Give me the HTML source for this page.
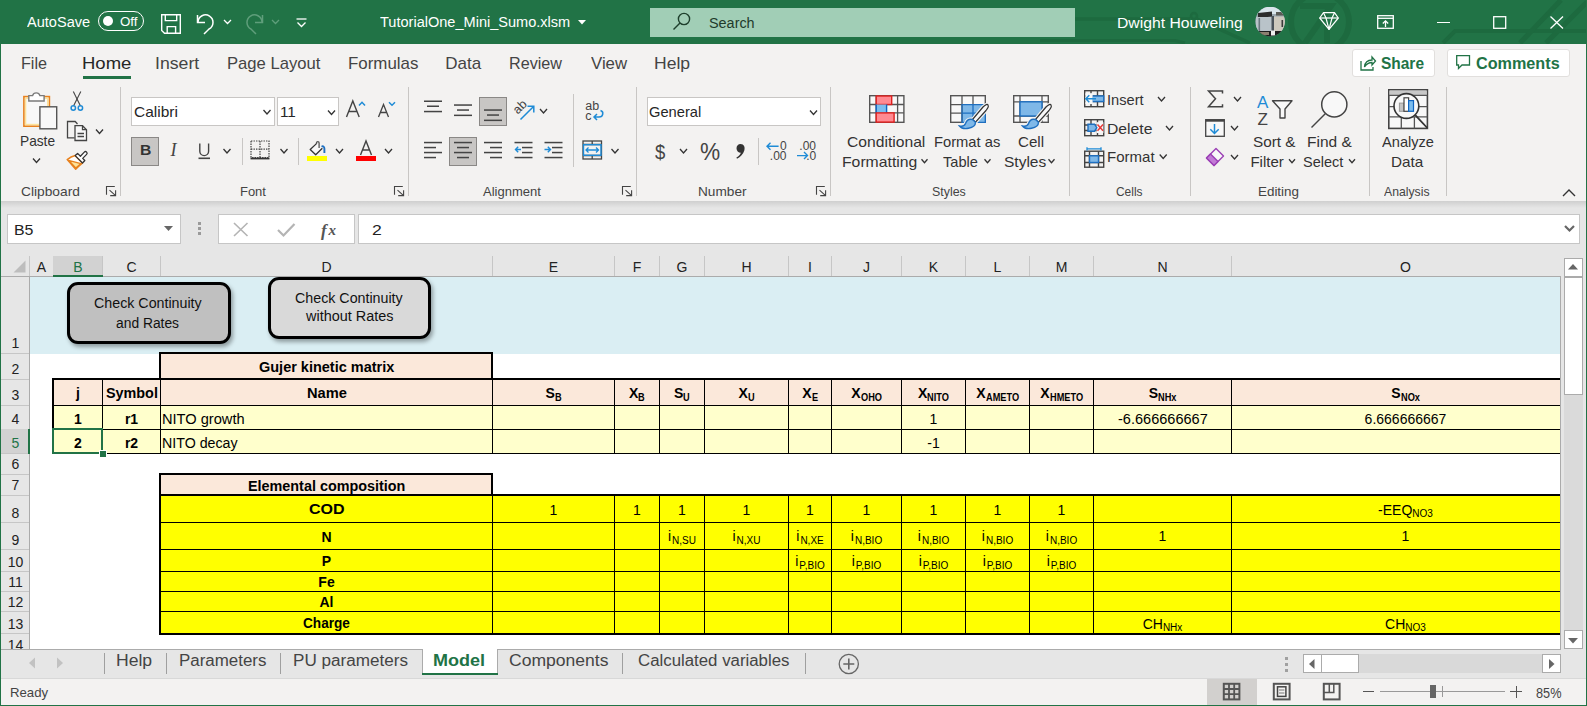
<!DOCTYPE html><html><head><meta charset="utf-8"><style>
html,body{margin:0;padding:0}body{width:1587px;height:706px;overflow:hidden;position:relative;background:#f3f2f1;font-family:"Liberation Sans",sans-serif}
.t{position:absolute;white-space:nowrap;line-height:normal;font-family:"Liberation Sans",sans-serif}
svg{overflow:visible}
</style></head><body>
<div style="position:absolute;left:0px;top:0px;width:1587px;height:44px;background:#217346;"></div>
<svg style="position:absolute;left:0px;top:0px;overflow:hidden;" width="1587" height="44" viewBox="0 0 1587 44"><g stroke="#1d6a3f" fill="none"><path d="M1040 19 H1190" stroke-width="3.5"/><circle cx="1194" cy="16" r="3" stroke-width="2.5"/><path d="M1197 19 L1250 43" stroke-width="3.5"/><path d="M1040 40.5 H1175 L1185 43" stroke-width="3"/><circle cx="1320" cy="22" r="29" stroke-width="6"/><path d="M1300 6 H1331 L1305 43 M1327 24 V43" stroke-width="6"/><path d="M1443 43 L1455 31 H1587" stroke-width="4"/><path d="M1520 43 L1561 0 M1546 43 L1587 2" stroke-width="5"/></g></svg>
<div class="t" style="left:27.00px;top:13.00px;font-size:15.5px;color:#fff;transform:scaleX(0.9399);transform-origin:0 0;">AutoSave</div>
<div style="position:absolute;left:98px;top:11px;width:46px;height:20px;background:transparent;box-sizing:border-box;border:1.5px solid #fff;border-radius:10px;"></div>
<div style="position:absolute;left:103px;top:16px;width:10px;height:10px;border-radius:50%;background:#fff"></div>
<div class="t" style="left:120.40px;top:14.00px;font-size:13.5px;color:#fff;transform:scaleX(0.9877);transform-origin:0 0;">Off</div>
<svg style="position:absolute;left:161px;top:14px;" width="21" height="21" viewBox="0 0 21 21"><g fill="none" stroke="#fff" stroke-width="1.4"><path d="M0.7 0.7 H19.3 V19.3 H3.5 L0.7 16.5 Z"/><path d="M4.3 0.7 V6.6 H15.7 V0.7"/><path d="M6.2 19.3 V12.6 H14.6 V19.3"/></g></svg>
<svg style="position:absolute;left:196px;top:13px;" width="20" height="22" viewBox="0 0 20 22"><g fill="none" stroke="#fff" stroke-width="1.5"><path d="M2 9 A7.5 7.5 0 1 1 13 16 L8 21"/><path d="M1.5 2 V9.5 H9"/></g></svg>
<svg style="position:absolute;left:223px;top:19px;" width="9" height="6" viewBox="0 0 9 6"><path d="M1 1 L4.5 4.5 L8 1" fill="none" stroke="#fff" stroke-width="1.3"/></svg>
<svg style="position:absolute;left:244px;top:13px;" width="20" height="22" viewBox="0 0 20 22"><g fill="none" stroke="#5f9e7b" stroke-width="1.5"><path d="M18 9 A7.5 7.5 0 1 0 7 16 L12 21"/><path d="M18.5 2 V9.5 H11"/></g></svg>
<svg style="position:absolute;left:271px;top:19px;" width="9" height="6" viewBox="0 0 9 6"><path d="M1 1 L4.5 4.5 L8 1" fill="none" stroke="#5f9e7b" stroke-width="1.3"/></svg>
<svg style="position:absolute;left:296px;top:18px;" width="11" height="10" viewBox="0 0 11 10"><g fill="none" stroke="#fff" stroke-width="1.3"><path d="M0.5 1 H10.5"/><path d="M1.5 4.5 L5.5 8.5 L9.5 4.5"/></g></svg>
<div class="t" style="left:379.71px;top:13.00px;font-size:15.5px;color:#fff;transform:scaleX(0.9383);transform-origin:0 0;">TutorialOne_Mini_Sumo.xlsm</div>
<svg style="position:absolute;left:578px;top:20px;" width="8" height="5" viewBox="0 0 8 5"><path d="M0 0 H8 L4 4.5 Z" fill="#fff"/></svg>
<div style="position:absolute;left:650px;top:8px;width:425px;height:29px;background:#a1ceb6;"></div>
<svg style="position:absolute;left:672px;top:12px;" width="19" height="19" viewBox="0 0 19 19"><g fill="none" stroke="#1e3f2c" stroke-width="1.4"><circle cx="12" cy="7" r="5.6"/><path d="M8 11 L1.5 17.5"/></g></svg>
<div class="t" style="left:709.35px;top:14.00px;font-size:15.5px;color:#1f3b2b;transform:scaleX(0.9292);transform-origin:0 0;">Search</div>
<div class="t" style="left:1116.74px;top:14.00px;font-size:15.5px;color:#fff;transform:scaleX(1.0137);transform-origin:0 0;">Dwight Houweling</div>
<svg style="position:absolute;left:1255px;top:7px;" width="31" height="30" viewBox="0 0 31 30"><defs><clipPath id="av"><circle cx="15.1" cy="14.6" r="14.8"/></clipPath></defs><g clip-path="url(#av)"><rect width="31" height="30" fill="#9aa6ae"/><rect x="0" y="0" width="31" height="7" fill="#d8e4ea"/><path d="M3 6 L17 4.5 L17 9.5 L3 11 Z" fill="#2c2c2c"/><rect x="1" y="10" width="16" height="16" fill="#b9c3c9"/><rect x="3.5" y="11" width="1.6" height="14" fill="#6b7880"/><rect x="16.5" y="9" width="2.5" height="17" fill="#4a525a"/><rect x="19" y="9.5" width="12" height="14.5" fill="#cdc8bd"/><rect x="21" y="5" width="9" height="3.5" fill="#5a5a55"/><rect x="26.5" y="13" width="1.6" height="7" fill="#3a3a3a"/><rect x="0" y="24" width="31" height="6" fill="#1f1f1f"/><rect x="0" y="25" width="14" height="3" fill="#8d8070"/><rect x="16" y="23.5" width="4" height="5" fill="#eeeeee"/></g></svg>
<svg style="position:absolute;left:1319px;top:12px;" width="20" height="18" viewBox="0 0 20 18"><g fill="none" stroke="#fff" stroke-width="1.2" stroke-linejoin="round"><path d="M4.5 0.7 H15.5 L19.3 6 L10 17.3 L0.7 6 Z"/><path d="M0.7 6 H19.3"/><path d="M4.5 0.7 L7 6 L10 17.3 L13 6 L15.5 0.7"/></g></svg>
<svg style="position:absolute;left:1377px;top:15px;" width="17" height="14" viewBox="0 0 17 14"><g fill="none" stroke="#fff" stroke-width="1.3"><rect x="0.7" y="0.7" width="15.6" height="12.6"/><path d="M0.7 3.3 H16.3"/><path d="M8.5 12 V6"/><path d="M5.8 8.5 L8.5 5.8 L11.2 8.5"/></g></svg>
<div style="position:absolute;left:1437px;top:22px;width:13px;height:1.3px;background:#fff;"></div>
<svg style="position:absolute;left:1493px;top:16px;" width="14" height="13" viewBox="0 0 14 13"><rect x="0.7" y="0.7" width="12" height="11.6" fill="none" stroke="#fff" stroke-width="1.3"/></svg>
<svg style="position:absolute;left:1550px;top:16px;" width="14" height="13" viewBox="0 0 14 13"><path d="M0.5 0.5 L13 12.5 M13 0.5 L0.5 12.5" fill="none" stroke="#fff" stroke-width="1.3"/></svg>
<div class="t" style="left:21.31px;top:54.00px;font-size:17px;color:#444;transform:scaleX(0.9507);transform-origin:0 0;">File</div>
<div class="t" style="left:81.52px;top:54.00px;font-size:17px;color:#262626;transform:scaleX(1.0885);transform-origin:0 0;">Home</div>
<div style="position:absolute;left:83px;top:76px;width:48px;height:3px;background:#217346;"></div>
<div class="t" style="left:155.41px;top:54.00px;font-size:17px;color:#444;transform:scaleX(1.0395);transform-origin:0 0;">Insert</div>
<div class="t" style="left:227.17px;top:54.00px;font-size:17px;color:#444;transform:scaleX(0.9786);transform-origin:0 0;">Page Layout</div>
<div class="t" style="left:348.05px;top:54.00px;font-size:17px;color:#444;transform:scaleX(0.9937);transform-origin:0 0;">Formulas</div>
<div class="t" style="left:445.24px;top:54.00px;font-size:17px;color:#444;">Data</div>
<div class="t" style="left:509.01px;top:54.00px;font-size:17px;color:#444;transform:scaleX(0.9504);transform-origin:0 0;">Review</div>
<div class="t" style="left:590.92px;top:54.00px;font-size:17px;color:#444;transform:scaleX(0.9872);transform-origin:0 0;">View</div>
<div class="t" style="left:653.89px;top:54.00px;font-size:17px;color:#444;transform:scaleX(1.0336);transform-origin:0 0;">Help</div>
<div style="position:absolute;left:1352px;top:49px;width:83px;height:28px;background:#fff;box-sizing:border-box;border:1px solid #e1dfdd;border-radius:3px;"></div>
<svg style="position:absolute;left:1360px;top:55px;" width="16" height="16" viewBox="0 0 16 16"><g fill="none" stroke="#217346" stroke-width="1.3"><path d="M1 6 V15 H13 V12"/><path d="M4.5 12 C5 7 8 5 12 5 V2 L15.5 6 L12 10 V7.5 C9 7.5 6.5 9 4.5 12 Z"/></g></svg>
<div class="t" style="left:1381.24px;top:54.00px;font-size:17px;color:#217346;font-weight:bold;transform:scaleX(0.9100);transform-origin:0 0;">Share</div>
<div style="position:absolute;left:1447px;top:49px;width:123px;height:28px;background:#fff;box-sizing:border-box;border:1px solid #e1dfdd;border-radius:3px;"></div>
<svg style="position:absolute;left:1456px;top:55px;" width="15" height="15" viewBox="0 0 15 15"><path d="M0.7 0.7 H13.5 V10 H6 L2.5 13.5 V10 H0.7 Z" fill="none" stroke="#217346" stroke-width="1.3"/></svg>
<div class="t" style="left:1476.05px;top:54.00px;font-size:17px;color:#217346;font-weight:bold;transform:scaleX(0.9521);transform-origin:0 0;">Comments</div>
<div style="position:absolute;left:120px;top:87px;width:1px;height:109px;background:#c8c6c4;"></div>
<div style="position:absolute;left:408px;top:87px;width:1px;height:109px;background:#c8c6c4;"></div>
<div style="position:absolute;left:636px;top:87px;width:1px;height:109px;background:#c8c6c4;"></div>
<div style="position:absolute;left:830px;top:87px;width:1px;height:109px;background:#c8c6c4;"></div>
<div style="position:absolute;left:1069px;top:87px;width:1px;height:109px;background:#c8c6c4;"></div>
<div style="position:absolute;left:1190px;top:87px;width:1px;height:109px;background:#c8c6c4;"></div>
<div style="position:absolute;left:1369px;top:87px;width:1px;height:109px;background:#c8c6c4;"></div>
<div style="position:absolute;left:1446px;top:87px;width:1px;height:109px;background:#c8c6c4;"></div>
<svg style="position:absolute;left:22px;top:90px;" width="37" height="40" viewBox="0 0 37 40"><rect x="1.9" y="6.6" width="25.5" height="29.6" fill="#f8f8f8" stroke="#e8821e" stroke-width="1.6"/><rect x="3.6" y="8.3" width="22.1" height="26.2" fill="none" stroke="#fde39a" stroke-width="1.4"/><path d="M6.8 11 V5.6 H10.6 A3.8 3.8 0 0 1 17.9 5.6 H22.1 V11 Z" fill="#fff" stroke="#7a7a7a" stroke-width="1.4"/><rect x="17.9" y="16.8" width="16.8" height="22" fill="#f8f8f8" stroke="#555" stroke-width="1.4"/></svg>
<div class="t" style="left:19.60px;top:132.00px;font-size:15px;color:#333;transform:scaleX(0.9136);transform-origin:0 0;">Paste</div>
<svg style="position:absolute;left:32px;top:157px;" width="9" height="6" viewBox="0 0 9 6"><path d="M1.00 1.50 L4.50 5.50 L8.00 1.50" fill="none" stroke="#333" stroke-width="1.3"/></svg>
<svg style="position:absolute;left:70px;top:90px;" width="14" height="21" viewBox="0 0 14 21"><g fill="none" stroke="#444" stroke-width="1.1"><path d="M3.3 1.5 L10.5 16"/><path d="M10.8 1.5 L3.5 16"/></g><g fill="none" stroke="#1e8bd6" stroke-width="1.5"><circle cx="3.3" cy="18" r="2.2"/><circle cx="10.4" cy="18" r="2.2"/></g></svg>
<svg style="position:absolute;left:66px;top:120px;" width="22" height="22" viewBox="0 0 22 22"><g fill="none" stroke="#444" stroke-width="1.3"><path d="M8.5 17.8 H1.5 V1.5 H9.2 L11.5 4"/><path d="M9 5.7 H16.5 L20.5 9.7 V20.5 H9 Z" fill="#f8f8f8"/><path d="M16.5 5.7 V9.7 H20.5"/><path d="M11.5 13.5 H18 M11.5 16.5 H18"/></g></svg>
<svg style="position:absolute;left:95px;top:128px;" width="9" height="6" viewBox="0 0 9 6"><path d="M1.00 1.50 L4.50 5.50 L8.00 1.50" fill="none" stroke="#333" stroke-width="1.3"/></svg>
<svg style="position:absolute;left:64px;top:148px;" width="26" height="24" viewBox="0 0 26 24"><path d="M3.2 11.6 Q7 8.5 11.2 7.6 L18.5 15 Q15 18 11.7 21.2 Z" fill="#fff" stroke="#e8821e" stroke-width="1.5" stroke-linejoin="round"/><path d="M4.5 12.3 L17 15.6 L11.8 20 Z" fill="#fde39a" stroke="#e8821e" stroke-width="1.3" stroke-linejoin="round"/><path d="M11.2 7.6 L13.6 5.4 L16.4 8.2 L20.3 4.1 A1.6 1.6 0 0 1 22.6 6.4 L18.7 10.4 L20.8 12.5 L18.5 15 Z" fill="#fff" stroke="#333" stroke-width="1.3" stroke-linejoin="round"/></svg>
<div class="t" style="left:20.51px;top:184.00px;font-size:13px;color:#444;transform:scaleX(1.0583);transform-origin:0 0;">Clipboard</div>
<svg style="position:absolute;left:106px;top:186px;" width="11" height="11" viewBox="0 0 11 11"><g fill="none" stroke="#444" stroke-width="1.1"><path d="M0.5 8.8 V0.5 H8.8"/><path d="M3.5 4.2 L9.6 9.6 M9.6 4.2 V9.6 H4.2"/></g></svg>
<div style="position:absolute;left:131px;top:97px;width:144px;height:29px;background:#fff;box-sizing:border-box;border:1px solid #c8c6c4;"></div>
<div class="t" style="left:133.73px;top:103.00px;font-size:15px;color:#262626;transform:scaleX(1.0313);transform-origin:0 0;">Calibri</div>
<svg style="position:absolute;left:262px;top:109px;" width="9" height="6" viewBox="0 0 9 6"><path d="M1.50 1.00 L5.00 5.00 L8.50 1.00" fill="none" stroke="#333" stroke-width="1.3"/></svg>
<div style="position:absolute;left:277px;top:97px;width:62px;height:29px;background:#fff;box-sizing:border-box;border:1px solid #c8c6c4;"></div>
<div class="t" style="left:279.85px;top:103.00px;font-size:15px;color:#262626;transform:scaleX(1.0200);transform-origin:0 0;">11</div>
<svg style="position:absolute;left:327px;top:109px;" width="9" height="6" viewBox="0 0 9 6"><path d="M1.00 1.50 L4.50 5.50 L8.00 1.50" fill="none" stroke="#333" stroke-width="1.3"/></svg>
<svg style="position:absolute;left:345px;top:100px;" width="22" height="18" viewBox="0 0 22 18"><g fill="none" stroke="#444" stroke-width="1.4"><path d="M1.5 17 L7.8 1 L14.2 17 M4 11.5 H11.6"/></g><path d="M14 5.5 L17 2.3 L20 5.5" fill="none" stroke="#1e8bd6" stroke-width="1.5"/></svg>
<svg style="position:absolute;left:377px;top:101px;" width="20" height="17" viewBox="0 0 20 17"><g fill="none" stroke="#444" stroke-width="1.3"><path d="M1.5 16 L6.5 3.6 L11.5 16 M3.5 11.5 H9.5"/></g><path d="M12 1.3 L15 4.3 L18 1.3" fill="none" stroke="#1e8bd6" stroke-width="1.5"/></svg>
<div style="position:absolute;left:131px;top:137px;width:28px;height:29px;background:#c8c6c4;box-sizing:border-box;border:1px solid #8a8886;"></div>
<div class="t" style="left:139.68px;top:141.00px;font-size:15px;color:#333;font-weight:bold;transform:scaleX(1.0492);transform-origin:0 0;">B</div>
<div class="t" style="left:170.50px;top:140.00px;font-size:18px;color:#444;font-family:'Liberation Serif';font-style:italic;">I</div>
<svg style="position:absolute;left:197px;top:143px;" width="15" height="18" viewBox="0 0 15 18"><g fill="none" stroke="#444" stroke-width="1.4"><path d="M2.8 0.5 V8.2 A4.4 4.4 0 0 0 11.6 8.2 V0.5"/></g><rect x="1.5" y="14.5" width="11.5" height="1.6" fill="#444"/></svg>
<svg style="position:absolute;left:222px;top:148px;" width="9" height="6" viewBox="0 0 9 6"><path d="M1.50 1.00 L5.00 5.00 L8.50 1.00" fill="none" stroke="#333" stroke-width="1.3"/></svg>
<div style="position:absolute;left:242px;top:138px;width:1px;height:27px;background:#c8c6c4;"></div>
<svg style="position:absolute;left:250px;top:140px;" width="21" height="21" viewBox="0 0 21 21"><g fill="none" stroke="#444" stroke-width="1.2" stroke-dasharray="1.4 1.1"><rect x="1" y="1" width="18" height="16.5"/><path d="M10 1 V17.5 M1 9.2 H19"/></g><rect x="0.5" y="17.6" width="19" height="1.8" fill="#333"/></svg>
<svg style="position:absolute;left:279px;top:148px;" width="9" height="6" viewBox="0 0 9 6"><path d="M1.50 1.00 L5.00 5.00 L8.50 1.00" fill="none" stroke="#333" stroke-width="1.3"/></svg>
<div style="position:absolute;left:298px;top:138px;width:1px;height:27px;background:#c8c6c4;"></div>
<svg style="position:absolute;left:309px;top:140px;" width="18" height="16" viewBox="0 0 18 16"><path d="M7.5 3.6 L1.2 9.5 L6.7 14.7 L13.3 8.2 Z" fill="#f8f8f8"/><path d="M7.5 3.6 L1.2 9.5 L6.7 14.7 L13.3 8.2" fill="none" stroke="#333" stroke-width="1.3" stroke-linejoin="round"/><path d="M7.5 4 V2.9 A1.3 1.3 0 0 1 10.1 2.9 V8" fill="none" stroke="#555" stroke-width="1.3"/><path d="M12.6 6.7 C14.2 5.6 15.4 7 15.4 8.7 V13" fill="none" stroke="#1e6fc0" stroke-width="1.9"/></svg>
<div style="position:absolute;left:307px;top:156px;width:20px;height:5px;background:#ffff00;"></div>
<svg style="position:absolute;left:335px;top:148px;" width="9" height="6" viewBox="0 0 9 6"><path d="M1.00 1.00 L4.50 5.00 L8.00 1.00" fill="none" stroke="#333" stroke-width="1.3"/></svg>
<svg style="position:absolute;left:359px;top:140px;" width="15" height="16" viewBox="0 0 15 16"><g fill="none" stroke="#444" stroke-width="1.4"><path d="M1.5 15 L7 1 L12.5 15 M3.5 10 H10.5"/></g></svg>
<div style="position:absolute;left:356px;top:156px;width:20px;height:5px;background:#ff0000;"></div>
<svg style="position:absolute;left:384px;top:148px;" width="9" height="6" viewBox="0 0 9 6"><path d="M1.00 1.00 L4.50 5.00 L8.00 1.00" fill="none" stroke="#333" stroke-width="1.3"/></svg>
<div class="t" style="left:239.96px;top:184.00px;font-size:13px;color:#444;">Font</div>
<svg style="position:absolute;left:394px;top:186px;" width="11" height="11" viewBox="0 0 11 11"><g fill="none" stroke="#444" stroke-width="1.1"><path d="M0.5 8.8 V0.5 H8.8"/><path d="M3.5 4.2 L9.6 9.6 M9.6 4.2 V9.6 H4.2"/></g></svg>
<svg style="position:absolute;left:424px;top:0px;" width="20" height="200" viewBox="0 0 20 200"><rect x="0" y="100.5" width="18" height="1.5" fill="#444"/><rect x="3" y="105.5" width="12" height="1.5" fill="#444"/><rect x="0" y="110.8" width="18" height="1.5" fill="#444"/></svg>
<svg style="position:absolute;left:454px;top:0px;" width="20" height="200" viewBox="0 0 20 200"><rect x="0" y="104.3" width="18" height="1.5" fill="#444"/><rect x="3" y="109.3" width="12" height="1.5" fill="#444"/><rect x="0" y="114.6" width="18" height="1.5" fill="#444"/></svg>
<div style="position:absolute;left:479px;top:97px;width:28px;height:29px;background:#c8c6c4;box-sizing:border-box;border:1px solid #8a8886;"></div>
<svg style="position:absolute;left:484px;top:0px;" width="20" height="200" viewBox="0 0 20 200"><rect x="0" y="109.3" width="18" height="1.5" fill="#444"/><rect x="3" y="114.3" width="12" height="1.5" fill="#444"/><rect x="0" y="119.6" width="18" height="1.5" fill="#444"/></svg>
<svg style="position:absolute;left:512px;top:99px;" width="24" height="22" viewBox="0 0 24 22"><g transform="translate(7.6 7.8) rotate(-45)"><text x="0" y="4.3" text-anchor="middle" font-family="Liberation Sans" font-size="12.5" fill="#444">ab</text></g><path d="M8.5 20.5 L21.8 7.2 M15.5 7.2 H21.8 V13.5" fill="none" stroke="#1e8bd6" stroke-width="1.5"/></svg>
<svg style="position:absolute;left:539px;top:108px;" width="9" height="6" viewBox="0 0 9 6"><path d="M1.00 1.00 L4.50 5.00 L8.00 1.00" fill="none" stroke="#333" stroke-width="1.3"/></svg>
<svg style="position:absolute;left:424px;top:0px;" width="20" height="200" viewBox="0 0 20 200"><rect x="0" y="141.8" width="18" height="1.5" fill="#444"/><rect x="0" y="146.8" width="12" height="1.5" fill="#444"/><rect x="0" y="151.8" width="18" height="1.5" fill="#444"/><rect x="0" y="156.8" width="12" height="1.5" fill="#444"/></svg>
<div style="position:absolute;left:449px;top:137px;width:28px;height:29px;background:#c8c6c4;box-sizing:border-box;border:1px solid #8a8886;"></div>
<svg style="position:absolute;left:454px;top:0px;" width="20" height="200" viewBox="0 0 20 200"><rect x="0" y="141.8" width="18" height="1.5" fill="#444"/><rect x="3" y="146.8" width="12" height="1.5" fill="#444"/><rect x="0" y="151.8" width="18" height="1.5" fill="#444"/><rect x="3" y="156.8" width="12" height="1.5" fill="#444"/></svg>
<svg style="position:absolute;left:484px;top:0px;" width="20" height="200" viewBox="0 0 20 200"><rect x="0" y="141.8" width="18" height="1.5" fill="#444"/><rect x="6" y="146.8" width="12" height="1.5" fill="#444"/><rect x="0" y="151.8" width="18" height="1.5" fill="#444"/><rect x="6" y="156.8" width="12" height="1.5" fill="#444"/></svg>
<svg style="position:absolute;left:514px;top:140px;" width="20" height="20" viewBox="0 0 20 20"><g fill="#444"><rect x="0.5" y="1.8" width="18" height="1.5"/><rect x="8" y="6.8" width="10.5" height="1.5"/><rect x="8" y="11.8" width="10.5" height="1.5"/><rect x="0.5" y="16.8" width="18" height="1.5"/></g><path d="M7 9.5 H1.5 M4.2 6.8 L1.5 9.5 L4.2 12.2" fill="none" stroke="#1e8bd6" stroke-width="1.4"/></svg>
<svg style="position:absolute;left:544px;top:140px;" width="20" height="20" viewBox="0 0 20 20"><g fill="#444"><rect x="0.5" y="1.8" width="18" height="1.5"/><rect x="8" y="6.8" width="10.5" height="1.5"/><rect x="8" y="11.8" width="10.5" height="1.5"/><rect x="0.5" y="16.8" width="18" height="1.5"/></g><path d="M0.5 9.5 H6.5 M3.8 6.8 L6.5 9.5 L3.8 12.2" fill="none" stroke="#1e8bd6" stroke-width="1.4"/></svg>
<div style="position:absolute;left:573px;top:94px;width:1px;height:73px;background:#c8c6c4;"></div>
<svg style="position:absolute;left:584px;top:101px;" width="22" height="21" viewBox="0 0 22 21"><text x="1.3" y="9.3" font-family="Liberation Sans" font-size="12.5" fill="#444">ab</text><text x="1.3" y="18.8" font-family="Liberation Sans" font-size="12.5" fill="#444">c</text><path d="M16.5 9.5 C20 10.5 19.5 16 15 16 H10 M13 13 L10 16 L13 19" fill="none" stroke="#1e8bd6" stroke-width="1.5"/></svg>
<svg style="position:absolute;left:582px;top:140px;" width="21" height="21" viewBox="0 0 21 21"><g fill="none" stroke="#444" stroke-width="1.3"><rect x="1" y="1" width="18.5" height="18"/><path d="M10.2 1 V4.5 M10.2 15.5 V19 M1 4.5 H19.5 M1 15.5 H19.5"/></g><rect x="1.5" y="4.7" width="17.5" height="10.6" fill="none" stroke="#1e8bd6" stroke-width="1.4"/><path d="M4 10 H16.5 M6.5 7.5 L4 10 L6.5 12.5 M14 7.5 L16.5 10 L14 12.5" fill="none" stroke="#1e8bd6" stroke-width="1.3"/></svg>
<svg style="position:absolute;left:610px;top:148px;" width="9" height="6" viewBox="0 0 9 6"><path d="M1.50 1.00 L5.00 5.00 L8.50 1.00" fill="none" stroke="#333" stroke-width="1.3"/></svg>
<div class="t" style="left:483.00px;top:184.00px;font-size:13px;color:#444;">Alignment</div>
<svg style="position:absolute;left:622px;top:186px;" width="11" height="11" viewBox="0 0 11 11"><g fill="none" stroke="#444" stroke-width="1.1"><path d="M0.5 8.8 V0.5 H8.8"/><path d="M3.5 4.2 L9.6 9.6 M9.6 4.2 V9.6 H4.2"/></g></svg>
<div style="position:absolute;left:647px;top:97px;width:174px;height:29px;background:#fff;box-sizing:border-box;border:1px solid #c8c6c4;"></div>
<div class="t" style="left:649.47px;top:103.00px;font-size:15px;color:#262626;transform:scaleX(0.9787);transform-origin:0 0;">General</div>
<svg style="position:absolute;left:809px;top:109px;" width="9" height="6" viewBox="0 0 9 6"><path d="M1.00 1.50 L4.50 5.50 L8.00 1.50" fill="none" stroke="#333" stroke-width="1.3"/></svg>
<div class="t" style="left:655.12px;top:140.00px;font-size:21px;color:#444;transform:scaleX(0.8805);transform-origin:0 0;">$</div>
<svg style="position:absolute;left:679px;top:148px;" width="9" height="6" viewBox="0 0 9 6"><path d="M1.00 1.00 L4.50 5.00 L8.00 1.00" fill="none" stroke="#333" stroke-width="1.3"/></svg>
<div class="t" style="left:699.71px;top:138.00px;font-size:24px;color:#444;transform:scaleX(0.9451);transform-origin:0 0;">%</div>
<svg style="position:absolute;left:735px;top:143px;" width="11" height="17" viewBox="0 0 11 17"><path d="M5.5 1 C9 1 10.3 4 9.3 7.5 C8.3 11 5.5 14 2 15.8 L1.4 14.6 C3.8 13.3 5.5 11.5 5.8 9.8 C3.3 9.8 1.5 8 1.5 5.3 C1.5 2.6 3.3 1 5.5 1 Z" fill="#333"/></svg>
<div style="position:absolute;left:758px;top:138px;width:1px;height:27px;background:#c8c6c4;"></div>
<svg style="position:absolute;left:766px;top:140px;" width="22" height="22" viewBox="0 0 22 22"><text x="14" y="10" font-family="Liberation Sans" font-size="12" fill="#444">0</text><text x="20.5" y="20" text-anchor="end" font-family="Liberation Sans" font-size="12" fill="#444">.00</text><path d="M12.6 6.3 H1 M4.5 2.8 L1 6.3 L4.5 9.8" fill="none" stroke="#1e8bd6" stroke-width="1.4"/></svg>
<svg style="position:absolute;left:796px;top:140px;" width="22" height="22" viewBox="0 0 22 22"><text x="20" y="10" text-anchor="end" font-family="Liberation Sans" font-size="12" fill="#444">.00</text><text x="20.3" y="20" text-anchor="end" font-family="Liberation Sans" font-size="12" fill="#444">.0</text><path d="M1 15.6 H11.5 M8 12.1 L11.5 15.6 L8 19.1" fill="none" stroke="#1e8bd6" stroke-width="1.4"/></svg>
<div class="t" style="left:698.41px;top:184.00px;font-size:13px;color:#444;transform:scaleX(1.0494);transform-origin:0 0;">Number</div>
<svg style="position:absolute;left:816px;top:186px;" width="11" height="11" viewBox="0 0 11 11"><g fill="none" stroke="#444" stroke-width="1.1"><path d="M0.5 8.8 V0.5 H8.8"/><path d="M3.5 4.2 L9.6 9.6 M9.6 4.2 V9.6 H4.2"/></g></svg>
<svg style="position:absolute;left:869px;top:95px;" width="37" height="29" viewBox="0 0 37 29"><rect x="0.7" y="0.7" width="34.2" height="26.6" fill="#f8f8f8" stroke="#555" stroke-width="1.4"/><g stroke="#555" stroke-width="1.3"><path d="M7.2 0.7 V27.3 M28.6 0.7 V27.3 M0.7 9.5 H34.9 M0.7 17.9 H34.9"/></g><rect x="7.2" y="1" width="15.5" height="8.5" fill="#ff8a92" stroke="#e0201e" stroke-width="1.4"/><rect x="7.2" y="9.5" width="10.4" height="8.4" fill="#7cbdee"/><path d="M7.2 9.5 V17.9 M17.6 9.5 V17.9" stroke="#0f64c0" stroke-width="1.4"/><rect x="7.2" y="17.9" width="17.9" height="9.2" fill="#ff8a92" stroke="#e0201e" stroke-width="1.4"/></svg>
<div class="t" style="left:847.02px;top:133.00px;font-size:15px;color:#333;transform:scaleX(1.0440);transform-origin:0 0;">Conditional</div>
<div class="t" style="left:842.04px;top:153.00px;font-size:15px;color:#333;transform:scaleX(1.0500);transform-origin:0 0;">Formatting</div>
<svg style="position:absolute;left:920px;top:158px;" width="8" height="5.5" viewBox="0 0 8 5.5"><path d="M1.50 1.25 L4.50 4.75 L7.50 1.25" fill="none" stroke="#333" stroke-width="1.3"/></svg>
<svg style="position:absolute;left:950px;top:95px;" width="40" height="36" viewBox="0 0 40 36"><rect x="0.7" y="0.7" width="34.6" height="26.6" fill="#f8f8f8" stroke="#555" stroke-width="1.4"/><rect x="12" y="9.6" width="23.3" height="17.7" fill="#7fb8e8"/><g stroke="#555" stroke-width="1.3"><path d="M12 0.7 V27.3 M23 0.7 V9.6 M0.7 9.6 H12 M0.7 18.2 H12"/></g><g stroke="#1e6fc0" stroke-width="1.3" fill="none"><path d="M12 27.3 V9.6 H35.3 V27.3 Z M23 9.6 V27.3 M12 18.2 H35.3"/></g><g fill="none" stroke="#f3f2f1" stroke-width="3.5"><path d="M38.2 10.5 C37.5 8.5 35.5 9.5 33 12 L22.5 24.5 L25.5 27.2 L36 15.5 C38 13 38.8 11.5 38.2 10.5 Z"/><path d="M22.5 24.5 C19 23.5 16.5 25.5 15.5 28.5 C14.5 31 12 31.5 9.5 31 C11.5 33.5 15 34 18.5 33.3 C22.5 32.5 25.5 30 25.5 27.2 Z"/></g><path d="M38.2 10.5 C37.5 8.5 35.5 9.5 33 12 L22.5 24.5 L25.5 27.2 L36 15.5 C38 13 38.8 11.5 38.2 10.5 Z" fill="#f8f8f8" stroke="#333" stroke-width="1.2"/><path d="M22.5 24.5 C19 23.5 16.5 25.5 15.5 28.5 C14.5 31 12 31.5 9.5 31 C11.5 33.5 15 34 18.5 33.3 C22.5 32.5 25.5 30 25.5 27.2 Z" fill="#7fb8e8" stroke="#1e6fc0" stroke-width="1.4"/></svg>
<div class="t" style="left:934.22px;top:133.00px;font-size:15px;color:#333;transform:scaleX(0.9821);transform-origin:0 0;">Format as</div>
<div class="t" style="left:943.21px;top:153.00px;font-size:15px;color:#333;transform:scaleX(0.9749);transform-origin:0 0;">Table</div>
<svg style="position:absolute;left:983px;top:158px;" width="8" height="5.5" viewBox="0 0 8 5.5"><path d="M1.50 1.25 L4.50 4.75 L7.50 1.25" fill="none" stroke="#333" stroke-width="1.3"/></svg>
<svg style="position:absolute;left:1013px;top:95px;" width="40" height="36" viewBox="0 0 40 36"><rect x="0.7" y="0.7" width="34.6" height="26.6" fill="#f8f8f8" stroke="#555" stroke-width="1.4"/><g stroke="#555" stroke-width="1.3"><path d="M7 0.7 V27.3 M29 0.7 V27.3 M0.7 6.8 H35.3 M0.7 21 H35.3"/></g><rect x="7" y="6.8" width="22" height="14.2" fill="#7fb8e8" stroke="#1e6fc0" stroke-width="1.4"/><g fill="none" stroke="#f3f2f1" stroke-width="3.5"><path d="M38.2 10.5 C37.5 8.5 35.5 9.5 33 12 L22.5 24.5 L25.5 27.2 L36 15.5 C38 13 38.8 11.5 38.2 10.5 Z"/><path d="M22.5 24.5 C19 23.5 16.5 25.5 15.5 28.5 C14.5 31 12 31.5 9.5 31 C11.5 33.5 15 34 18.5 33.3 C22.5 32.5 25.5 30 25.5 27.2 Z"/></g><path d="M38.2 10.5 C37.5 8.5 35.5 9.5 33 12 L22.5 24.5 L25.5 27.2 L36 15.5 C38 13 38.8 11.5 38.2 10.5 Z" fill="#f8f8f8" stroke="#333" stroke-width="1.2"/><path d="M22.5 24.5 C19 23.5 16.5 25.5 15.5 28.5 C14.5 31 12 31.5 9.5 31 C11.5 33.5 15 34 18.5 33.3 C22.5 32.5 25.5 30 25.5 27.2 Z" fill="#7fb8e8" stroke="#1e6fc0" stroke-width="1.4"/></svg>
<div class="t" style="left:1018.24px;top:133.00px;font-size:15px;color:#333;transform:scaleX(1.0093);transform-origin:0 0;">Cell</div>
<div class="t" style="left:1004.30px;top:153.00px;font-size:15px;color:#333;transform:scaleX(1.0334);transform-origin:0 0;">Styles</div>
<svg style="position:absolute;left:1047px;top:158px;" width="8" height="5.5" viewBox="0 0 8 5.5"><path d="M1.50 1.25 L4.50 4.75 L7.50 1.25" fill="none" stroke="#333" stroke-width="1.3"/></svg>
<div class="t" style="left:932.24px;top:184.00px;font-size:13px;color:#444;transform:scaleX(0.9539);transform-origin:0 0;">Styles</div>
<svg style="position:absolute;left:1084px;top:90px;" width="21" height="21" viewBox="0 0 21 21"><g fill="none" stroke="#444" stroke-width="1.4"><rect x="0.7" y="0.7" width="19" height="16"/><path d="M0.7 6 H19.7 M0.7 11.5 H19.7 M7 0.7 V17 M13.5 0.7 V17"/></g><rect x="8" y="6" width="11.7" height="5.5" fill="#7fb8e8" stroke="#1e6fc0" stroke-width="1.4"/><rect x="1.4" y="3.2" width="7.2" height="10.8" fill="#f8f8f8"/><path d="M12 8.7 H1.8 M5.3 5.2 L1.8 8.7 L5.3 12.2" fill="none" stroke="#1e8bd6" stroke-width="1.5"/></svg>
<div class="t" style="left:1106.98px;top:91.00px;font-size:15px;color:#333;transform:scaleX(0.9757);transform-origin:0 0;">Insert</div>
<svg style="position:absolute;left:1157px;top:96px;" width="9" height="6" viewBox="0 0 9 6"><path d="M1.00 1.00 L4.50 5.00 L8.00 1.00" fill="none" stroke="#333" stroke-width="1.3"/></svg>
<svg style="position:absolute;left:1084px;top:119px;" width="21" height="21" viewBox="0 0 21 21"><g fill="none" stroke="#444" stroke-width="1.4"><rect x="0.7" y="0.7" width="19" height="16"/><path d="M0.7 6 H19.7 M0.7 11.5 H19.7 M7 0.7 V17 M13.5 0.7 V17"/></g><rect x="12.6" y="3.2" width="6.8" height="10.8" fill="#f8f8f8"/><path d="M4 5.2 H10.5 L12.8 8.7 L10.5 12.2 H4 Z" fill="#7fb8e8" stroke="#1e6fc0" stroke-width="1.4"/><path d="M13.5 5.5 L19 11.8 M19 5.5 L13.5 11.8" stroke="#e83a3a" stroke-width="1.5"/></svg>
<div class="t" style="left:1107.04px;top:120.00px;font-size:15px;color:#333;transform:scaleX(1.0464);transform-origin:0 0;">Delete</div>
<svg style="position:absolute;left:1165px;top:125px;" width="9" height="6" viewBox="0 0 9 6"><path d="M1.00 1.00 L4.50 5.00 L8.00 1.00" fill="none" stroke="#333" stroke-width="1.3"/></svg>
<svg style="position:absolute;left:1084px;top:147px;" width="21" height="21" viewBox="0 0 21 21"><g fill="none" stroke="#444" stroke-width="1.4"><rect x="0.7" y="4.2" width="19" height="16"/><path d="M0.7 8.8 H19.7 M0.7 15.5 H19.7 M5.5 4.2 V20.2 M14.5 4.2 V20.2"/></g><rect x="5.5" y="8.8" width="9" height="6.7" fill="#7fb8e8" stroke="#1e6fc0" stroke-width="1.4"/><path d="M3 1.8 H17 M3 0.2 V3.4 M17 0.2 V3.4" stroke="#1e8bd6" stroke-width="1.3"/></svg>
<div class="t" style="left:1107.09px;top:148.00px;font-size:15px;color:#333;">Format</div>
<svg style="position:absolute;left:1158px;top:153px;" width="9" height="6" viewBox="0 0 9 6"><path d="M1.70 1.50 L5.20 5.50 L8.70 1.50" fill="none" stroke="#333" stroke-width="1.3"/></svg>
<div class="t" style="left:1116.20px;top:184.00px;font-size:13px;color:#444;transform:scaleX(0.9166);transform-origin:0 0;">Cells</div>
<svg style="position:absolute;left:1207px;top:90px;" width="18" height="18" viewBox="0 0 18 18"><path d="M15.5 3.5 V1 H1.5 L8.5 8.8 L1.5 16.8 H15.5 V14.3" fill="none" stroke="#444" stroke-width="1.5"/></svg>
<svg style="position:absolute;left:1233px;top:96px;" width="9" height="6" viewBox="0 0 9 6"><path d="M1.00 1.00 L4.50 5.00 L8.00 1.00" fill="none" stroke="#333" stroke-width="1.3"/></svg>
<svg style="position:absolute;left:1205px;top:119px;" width="20" height="18" viewBox="0 0 20 18"><rect x="0.7" y="0.7" width="18.6" height="16.6" fill="#f8f8f8" stroke="#444" stroke-width="1.3"/><rect x="0.7" y="0.7" width="18.6" height="2" fill="#444"/><path d="M9.5 5 V14.5 M5.3 10.3 L9.5 14.5 L13.7 10.3" fill="none" stroke="#1e8bd6" stroke-width="1.5"/></svg>
<svg style="position:absolute;left:1230px;top:125px;" width="9" height="6" viewBox="0 0 9 6"><path d="M1.00 1.00 L4.50 5.00 L8.00 1.00" fill="none" stroke="#333" stroke-width="1.3"/></svg>
<svg style="position:absolute;left:1205px;top:147px;" width="20" height="20" viewBox="0 0 20 20"><path d="M1.5 11 L11 1.5 L18.5 9 L9 18.5 Z" fill="#f8f8f8" stroke="#9b3fb5" stroke-width="1.4" stroke-linejoin="round"/><path d="M1.5 11 L5.5 7 L13 14.5 L9 18.5 Z" fill="#c27bd6" stroke="#9b3fb5" stroke-width="1.4" stroke-linejoin="round"/></svg>
<svg style="position:absolute;left:1230px;top:154px;" width="9" height="6" viewBox="0 0 9 6"><path d="M1.00 1.00 L4.50 5.00 L8.00 1.00" fill="none" stroke="#333" stroke-width="1.3"/></svg>
<svg style="position:absolute;left:1256px;top:92px;" width="38" height="34" viewBox="0 0 38 34"><text x="1" y="15.5" font-family="Liberation Sans" font-size="17" fill="#1e8bd6">A</text><text x="1.5" y="33" font-family="Liberation Sans" font-size="17" fill="#444">Z</text><path d="M16.5 8.7 H36 L29 17 V26 H24 V17 Z" fill="#f8f8f8" stroke="#444" stroke-width="1.4" stroke-linejoin="round"/></svg>
<div class="t" style="left:1252.91px;top:133.00px;font-size:15px;color:#333;transform:scaleX(1.0215);transform-origin:0 0;">Sort &amp;</div>
<div class="t" style="left:1250.40px;top:153.00px;font-size:15px;color:#333;">Filter</div>
<svg style="position:absolute;left:1288px;top:158px;" width="8" height="5.5" viewBox="0 0 8 5.5"><path d="M1.00 1.25 L4.00 4.75 L7.00 1.25" fill="none" stroke="#333" stroke-width="1.3"/></svg>
<svg style="position:absolute;left:1309px;top:90px;" width="40" height="40" viewBox="0 0 40 40"><circle cx="25.3" cy="14.4" r="12.6" fill="#f8f8f8" stroke="#444" stroke-width="1.5"/><path d="M16.5 23.5 L2.5 37.5" stroke="#444" stroke-width="1.5"/></svg>
<div class="t" style="left:1306.76px;top:133.00px;font-size:15px;color:#333;transform:scaleX(1.0328);transform-origin:0 0;">Find &amp;</div>
<div class="t" style="left:1303.05px;top:153.00px;font-size:15px;color:#333;transform:scaleX(0.9664);transform-origin:0 0;">Select</div>
<svg style="position:absolute;left:1348px;top:158px;" width="8" height="5.5" viewBox="0 0 8 5.5"><path d="M1.00 1.25 L4.00 4.75 L7.00 1.25" fill="none" stroke="#333" stroke-width="1.3"/></svg>
<div class="t" style="left:1258.43px;top:184.00px;font-size:13px;color:#444;transform:scaleX(1.0309);transform-origin:0 0;">Editing</div>
<svg style="position:absolute;left:1388px;top:89px;" width="42" height="42" viewBox="0 0 42 42"><rect x="0.8" y="0.8" width="38.6" height="38.6" fill="#f8f8f8" stroke="#444" stroke-width="1.6"/><rect x="1.5" y="1.5" width="37.2" height="4.8" fill="#c8c8c8"/><g stroke="#555" stroke-width="1.3"><path d="M0.8 6.3 H39.4 M0.8 17.7 H39.4 M0.8 27.9 H39.4 M13.3 27.9 V39.4 M26.4 27.9 V39.4"/></g><circle cx="18.4" cy="17" r="12.4" fill="#f8f8f8" stroke="#333" stroke-width="1.6"/><path d="M27.3 26.2 L39.3 39" stroke="#333" stroke-width="1.8"/><rect x="11.4" y="14.1" width="4.6" height="8.2" fill="#c4c4c4" stroke="#999" stroke-width="1"/><rect x="16" y="8.8" width="4.6" height="13.5" fill="#fff" stroke="#444" stroke-width="1.2"/><rect x="20.6" y="11.6" width="4.9" height="10.7" fill="#7cbdee" stroke="#0f64c0" stroke-width="1.2"/></svg>
<div class="t" style="left:1382.40px;top:133.00px;font-size:15px;color:#333;transform:scaleX(0.9744);transform-origin:0 0;">Analyze</div>
<div class="t" style="left:1391.38px;top:153.00px;font-size:15px;color:#333;transform:scaleX(1.0181);transform-origin:0 0;">Data</div>
<div class="t" style="left:1384.40px;top:184.00px;font-size:13px;color:#444;transform:scaleX(0.9402);transform-origin:0 0;">Analysis</div>
<svg style="position:absolute;left:1562px;top:189px;" width="14" height="8" viewBox="0 0 14 8"><path d="M1 7 L7 1 L13 7" fill="none" stroke="#333" stroke-width="1.4"/></svg>
<div style="position:absolute;left:0px;top:201px;width:1587px;height:56px;background:#e6e6e6;"></div>
<div style="position:absolute;left:0px;top:201px;width:1587px;height:7px;background:linear-gradient(#cfcfcf,#e6e6e6);"></div>
<div style="position:absolute;left:7px;top:214px;width:174px;height:30px;background:#fff;box-sizing:border-box;border:1px solid #c6c6c6;"></div>
<div class="t" style="left:13.53px;top:221.00px;font-size:15px;color:#222;transform:scaleX(1.0606);transform-origin:0 0;">B5</div>
<svg style="position:absolute;left:164px;top:226px;" width="9" height="5" viewBox="0 0 9 5"><path d="M0 0 H9 L4.5 5 Z" fill="#666"/></svg>
<div style="position:absolute;left:198px;top:222px;width:3px;height:3px;background:#9a9a9a;"></div>
<div style="position:absolute;left:198px;top:227px;width:3px;height:3px;background:#9a9a9a;"></div>
<div style="position:absolute;left:198px;top:232px;width:3px;height:3px;background:#9a9a9a;"></div>
<div style="position:absolute;left:218px;top:214px;width:137px;height:30px;background:#fff;box-sizing:border-box;border:1px solid #c6c6c6;"></div>
<svg style="position:absolute;left:233px;top:222px;" width="16" height="15" viewBox="0 0 16 15"><path d="M1 1 L14.5 14 M14.5 1 L1 14" fill="none" stroke="#b4b4b4" stroke-width="1.6"/></svg>
<svg style="position:absolute;left:277px;top:222px;" width="19" height="15" viewBox="0 0 19 15"><path d="M1 8 L6.5 13.5 L17.5 2" fill="none" stroke="#b4b4b4" stroke-width="2.2"/></svg>
<div class="t" style="left:321.00px;top:221.00px;font-size:17px;color:#555;font-family:'Liberation Serif';font-style:italic;font-weight:bold;">f</div>
<div class="t" style="left:328.50px;top:222.00px;font-size:15px;color:#555;font-family:'Liberation Serif';font-style:italic;font-weight:bold;">x</div>
<div style="position:absolute;left:358px;top:214px;width:1222px;height:30px;background:#fff;box-sizing:border-box;border:1px solid #c6c6c6;"></div>
<div class="t" style="left:371.72px;top:221.00px;font-size:15px;color:#222;transform:scaleX(1.1722);transform-origin:0 0;">2</div>
<svg style="position:absolute;left:1564px;top:225px;" width="11" height="7" viewBox="0 0 11 7"><path d="M1 1 L5.5 5.5 L10 1" fill="none" stroke="#666" stroke-width="2.2"/></svg>
<div style="position:absolute;left:29px;top:277px;width:1531px;height:372px;background:#fff;"></div>
<div style="position:absolute;left:0px;top:257px;width:1561px;height:20px;background:#e6e6e6;"></div>
<div style="position:absolute;left:1561px;top:257px;width:26px;height:392px;background:#e6e6e6;"></div>
<svg style="position:absolute;left:13px;top:260px;" width="13" height="13" viewBox="0 0 13 13"><path d="M12.5 0.5 V12.5 H0.5 Z" fill="#bdbdbd"/></svg>
<div style="position:absolute;left:53px;top:256px;width:1px;height:21px;background:#c6c6c6;"></div>
<div class="t" style="left:36.83px;top:259.00px;font-size:14px;color:#222;">A</div>
<div style="position:absolute;left:53px;top:256px;width:50px;height:21px;background:#d2d2d2;"></div>
<div style="position:absolute;left:102px;top:256px;width:1px;height:21px;background:#c6c6c6;"></div>
<div class="t" style="left:73.33px;top:259.00px;font-size:14px;color:#217346;">B</div>
<div style="position:absolute;left:160px;top:256px;width:1px;height:21px;background:#c6c6c6;"></div>
<div class="t" style="left:126.44px;top:259.00px;font-size:14px;color:#222;">C</div>
<div style="position:absolute;left:492px;top:256px;width:1px;height:21px;background:#c6c6c6;"></div>
<div class="t" style="left:321.44px;top:259.00px;font-size:14px;color:#222;">D</div>
<div style="position:absolute;left:614px;top:256px;width:1px;height:21px;background:#c6c6c6;"></div>
<div class="t" style="left:548.83px;top:259.00px;font-size:14px;color:#222;">E</div>
<div style="position:absolute;left:659px;top:256px;width:1px;height:21px;background:#c6c6c6;"></div>
<div class="t" style="left:632.72px;top:259.00px;font-size:14px;color:#222;">F</div>
<div style="position:absolute;left:704px;top:256px;width:1px;height:21px;background:#c6c6c6;"></div>
<div class="t" style="left:676.56px;top:259.00px;font-size:14px;color:#222;">G</div>
<div style="position:absolute;left:788px;top:256px;width:1px;height:21px;background:#c6c6c6;"></div>
<div class="t" style="left:741.44px;top:259.00px;font-size:14px;color:#222;">H</div>
<div style="position:absolute;left:831px;top:256px;width:1px;height:21px;background:#c6c6c6;"></div>
<div class="t" style="left:808.06px;top:259.00px;font-size:14px;color:#222;">I</div>
<div style="position:absolute;left:901px;top:256px;width:1px;height:21px;background:#c6c6c6;"></div>
<div class="t" style="left:863.00px;top:259.00px;font-size:14px;color:#222;">J</div>
<div style="position:absolute;left:965px;top:256px;width:1px;height:21px;background:#c6c6c6;"></div>
<div class="t" style="left:928.83px;top:259.00px;font-size:14px;color:#222;">K</div>
<div style="position:absolute;left:1029px;top:256px;width:1px;height:21px;background:#c6c6c6;"></div>
<div class="t" style="left:993.61px;top:259.00px;font-size:14px;color:#222;">L</div>
<div style="position:absolute;left:1093px;top:256px;width:1px;height:21px;background:#c6c6c6;"></div>
<div class="t" style="left:1055.67px;top:259.00px;font-size:14px;color:#222;">M</div>
<div style="position:absolute;left:1231px;top:256px;width:1px;height:21px;background:#c6c6c6;"></div>
<div class="t" style="left:1157.44px;top:259.00px;font-size:14px;color:#222;">N</div>
<div class="t" style="left:1400.06px;top:259.00px;font-size:14px;color:#222;">O</div>
<div style="position:absolute;left:29px;top:256px;width:1px;height:21px;background:#c6c6c6;"></div>
<div style="position:absolute;left:0px;top:276px;width:1561px;height:1px;background:#ababab;"></div>
<div style="position:absolute;left:53px;top:275px;width:50px;height:2px;background:#217346;"></div>
<div style="position:absolute;left:0px;top:277px;width:29px;height:372px;background:#e6e6e6;"></div>
<div style="position:absolute;left:0px;top:353px;width:29px;height:1px;background:#c6c6c6;"></div>
<div class="t" style="left:11.61px;top:335.00px;font-size:14px;color:#222;">1</div>
<div style="position:absolute;left:0px;top:379px;width:29px;height:1px;background:#c6c6c6;"></div>
<div class="t" style="left:11.61px;top:361.00px;font-size:14px;color:#222;">2</div>
<div style="position:absolute;left:0px;top:405px;width:29px;height:1px;background:#c6c6c6;"></div>
<div class="t" style="left:11.61px;top:387.00px;font-size:14px;color:#222;">3</div>
<div style="position:absolute;left:0px;top:429px;width:29px;height:1px;background:#c6c6c6;"></div>
<div class="t" style="left:11.61px;top:411.00px;font-size:14px;color:#222;">4</div>
<div style="position:absolute;left:0px;top:429px;width:29px;height:24px;background:#d2d2d2;"></div>
<div style="position:absolute;left:0px;top:453px;width:29px;height:1px;background:#c6c6c6;"></div>
<div class="t" style="left:11.61px;top:435.00px;font-size:14px;color:#217346;">5</div>
<div style="position:absolute;left:0px;top:474px;width:29px;height:1px;background:#c6c6c6;"></div>
<div class="t" style="left:11.61px;top:456.00px;font-size:14px;color:#222;">6</div>
<div style="position:absolute;left:0px;top:495px;width:29px;height:1px;background:#c6c6c6;"></div>
<div class="t" style="left:11.61px;top:477.00px;font-size:14px;color:#222;">7</div>
<div style="position:absolute;left:0px;top:522px;width:29px;height:1px;background:#c6c6c6;"></div>
<div class="t" style="left:11.61px;top:505.00px;font-size:14px;color:#222;">8</div>
<div style="position:absolute;left:0px;top:549px;width:29px;height:1px;background:#c6c6c6;"></div>
<div class="t" style="left:11.61px;top:532.00px;font-size:14px;color:#222;">9</div>
<div style="position:absolute;left:0px;top:571px;width:29px;height:1px;background:#c6c6c6;"></div>
<div class="t" style="left:7.71px;top:554.00px;font-size:14px;color:#222;">10</div>
<div style="position:absolute;left:0px;top:591px;width:29px;height:1px;background:#c6c6c6;"></div>
<div class="t" style="left:8.23px;top:574.00px;font-size:14px;color:#222;">11</div>
<div style="position:absolute;left:0px;top:611px;width:29px;height:1px;background:#c6c6c6;"></div>
<div class="t" style="left:7.71px;top:594.00px;font-size:14px;color:#222;">12</div>
<div style="position:absolute;left:0px;top:633px;width:29px;height:1px;background:#c6c6c6;"></div>
<div class="t" style="left:7.71px;top:616.00px;font-size:14px;color:#222;">13</div>
<div class="t" style="left:7.71px;top:637.00px;font-size:14px;color:#222;">14</div>
<div style="position:absolute;left:29px;top:277px;width:1px;height:372px;background:#ababab;"></div>
<div style="position:absolute;left:28px;top:429px;width:2px;height:25px;background:#217346;"></div>
<div style="position:absolute;left:30px;top:277px;width:1530px;height:77px;background:#daeef3;"></div>
<div style="position:absolute;left:160px;top:353px;width:332px;height:26px;background:#fbe8da;"></div>
<div style="position:absolute;left:53px;top:379px;width:1507px;height:26px;background:#fbe8da;"></div>
<div style="position:absolute;left:53px;top:405px;width:1507px;height:48px;background:#ffffcc;"></div>
<div style="position:absolute;left:160px;top:474px;width:332px;height:21px;background:#fbe8da;"></div>
<div style="position:absolute;left:160px;top:495px;width:1400px;height:138px;background:#ffff00;"></div>
<div style="position:absolute;left:159px;top:352px;width:334px;height:2px;background:#000;"></div>
<div style="position:absolute;left:159px;top:352px;width:2px;height:28px;background:#000;"></div>
<div style="position:absolute;left:491px;top:352px;width:2px;height:28px;background:#000;"></div>
<div style="position:absolute;left:52px;top:378px;width:1508px;height:2px;background:#000;"></div>
<div style="position:absolute;left:52px;top:378px;width:2px;height:76px;background:#000;"></div>
<div style="position:absolute;left:102px;top:379px;width:1px;height:75px;background:#000;"></div>
<div style="position:absolute;left:160px;top:379px;width:1px;height:75px;background:#000;"></div>
<div style="position:absolute;left:492px;top:379px;width:1px;height:75px;background:#000;"></div>
<div style="position:absolute;left:614px;top:379px;width:1px;height:75px;background:#000;"></div>
<div style="position:absolute;left:659px;top:379px;width:1px;height:75px;background:#000;"></div>
<div style="position:absolute;left:704px;top:379px;width:1px;height:75px;background:#000;"></div>
<div style="position:absolute;left:788px;top:379px;width:1px;height:75px;background:#000;"></div>
<div style="position:absolute;left:831px;top:379px;width:1px;height:75px;background:#000;"></div>
<div style="position:absolute;left:901px;top:379px;width:1px;height:75px;background:#000;"></div>
<div style="position:absolute;left:965px;top:379px;width:1px;height:75px;background:#000;"></div>
<div style="position:absolute;left:1029px;top:379px;width:1px;height:75px;background:#000;"></div>
<div style="position:absolute;left:1093px;top:379px;width:1px;height:75px;background:#000;"></div>
<div style="position:absolute;left:1231px;top:379px;width:1px;height:75px;background:#000;"></div>
<div style="position:absolute;left:52px;top:405px;width:1508px;height:1px;background:#000;"></div>
<div style="position:absolute;left:52px;top:429px;width:1508px;height:1px;background:#000;"></div>
<div style="position:absolute;left:52px;top:453px;width:1508px;height:1px;background:#000;"></div>
<div style="position:absolute;left:159px;top:473px;width:334px;height:2px;background:#000;"></div>
<div style="position:absolute;left:159px;top:473px;width:2px;height:23px;background:#000;"></div>
<div style="position:absolute;left:491px;top:473px;width:2px;height:23px;background:#000;"></div>
<div style="position:absolute;left:159px;top:494px;width:1401px;height:2px;background:#000;"></div>
<div style="position:absolute;left:159px;top:494px;width:2px;height:141px;background:#000;"></div>
<div style="position:absolute;left:159px;top:633px;width:1401px;height:2px;background:#000;"></div>
<div style="position:absolute;left:492px;top:496px;width:1px;height:138px;background:#000;"></div>
<div style="position:absolute;left:614px;top:496px;width:1px;height:138px;background:#000;"></div>
<div style="position:absolute;left:659px;top:496px;width:1px;height:138px;background:#000;"></div>
<div style="position:absolute;left:704px;top:496px;width:1px;height:138px;background:#000;"></div>
<div style="position:absolute;left:788px;top:496px;width:1px;height:138px;background:#000;"></div>
<div style="position:absolute;left:831px;top:496px;width:1px;height:138px;background:#000;"></div>
<div style="position:absolute;left:901px;top:496px;width:1px;height:138px;background:#000;"></div>
<div style="position:absolute;left:965px;top:496px;width:1px;height:138px;background:#000;"></div>
<div style="position:absolute;left:1029px;top:496px;width:1px;height:138px;background:#000;"></div>
<div style="position:absolute;left:1093px;top:496px;width:1px;height:138px;background:#000;"></div>
<div style="position:absolute;left:1231px;top:496px;width:1px;height:138px;background:#000;"></div>
<div style="position:absolute;left:159px;top:522px;width:1401px;height:1px;background:#000;"></div>
<div style="position:absolute;left:159px;top:549px;width:1401px;height:1px;background:#000;"></div>
<div style="position:absolute;left:159px;top:571px;width:1401px;height:1px;background:#000;"></div>
<div style="position:absolute;left:159px;top:591px;width:1401px;height:1px;background:#000;"></div>
<div style="position:absolute;left:159px;top:611px;width:1401px;height:1px;background:#000;"></div>
<div style="position:absolute;left:52px;top:428px;width:51px;height:2px;background:#217346;"></div>
<div style="position:absolute;left:52px;top:428px;width:2px;height:26px;background:#217346;"></div>
<div style="position:absolute;left:101px;top:428px;width:2px;height:26px;background:#217346;"></div>
<div style="position:absolute;left:52px;top:452px;width:51px;height:2px;background:#217346;"></div>
<div style="position:absolute;left:100px;top:451px;width:6px;height:6px;background:#217346;box-shadow:0 0 0 1px #fff;"></div>
<div class="t" style="left:258.72px;top:359.00px;font-size:14px;color:#000;font-weight:bold;transform:scaleX(1.0349);transform-origin:0 0;">Gujer kinetic matrix</div>
<div class="t" style="left:76.06px;top:385.00px;font-size:14px;color:#000;font-weight:bold;">j</div>
<div class="t" style="left:105.57px;top:385.00px;font-size:14px;color:#000;font-weight:bold;transform:scaleX(1.0262);transform-origin:0 0;">Symbol</div>
<div class="t" style="left:306.80px;top:385.00px;font-size:14px;color:#000;font-weight:bold;transform:scaleX(1.0476);transform-origin:0 0;">Name</div>
<div class="t" style="left:545.51px;top:385.00px;font-size:14px;color:#000;font-weight:bold;">S</div>
<div class="t" style="left:554.85px;top:392.00px;font-size:10px;color:#000;font-weight:bold;transform:scaleX(0.9200);transform-origin:0 0;">B</div>
<div class="t" style="left:629.01px;top:385.00px;font-size:14px;color:#000;font-weight:bold;">X</div>
<div class="t" style="left:638.35px;top:392.00px;font-size:10px;color:#000;font-weight:bold;transform:scaleX(0.9200);transform-origin:0 0;">B</div>
<div class="t" style="left:674.01px;top:385.00px;font-size:14px;color:#000;font-weight:bold;">S</div>
<div class="t" style="left:683.35px;top:392.00px;font-size:10px;color:#000;font-weight:bold;transform:scaleX(0.9200);transform-origin:0 0;">U</div>
<div class="t" style="left:738.51px;top:385.00px;font-size:14px;color:#000;font-weight:bold;">X</div>
<div class="t" style="left:747.85px;top:392.00px;font-size:10px;color:#000;font-weight:bold;transform:scaleX(0.9200);transform-origin:0 0;">U</div>
<div class="t" style="left:802.26px;top:385.00px;font-size:14px;color:#000;font-weight:bold;">X</div>
<div class="t" style="left:811.60px;top:392.00px;font-size:10px;color:#000;font-weight:bold;transform:scaleX(0.9200);transform-origin:0 0;">E</div>
<div class="t" style="left:851.35px;top:385.00px;font-size:14px;color:#000;font-weight:bold;">X</div>
<div class="t" style="left:860.69px;top:392.00px;font-size:10px;color:#000;font-weight:bold;transform:scaleX(0.9200);transform-origin:0 0;">OHO</div>
<div class="t" style="left:917.93px;top:385.00px;font-size:14px;color:#000;font-weight:bold;">X</div>
<div class="t" style="left:927.26px;top:392.00px;font-size:10px;color:#000;font-weight:bold;transform:scaleX(0.9200);transform-origin:0 0;">NITO</div>
<div class="t" style="left:976.30px;top:385.00px;font-size:14px;color:#000;font-weight:bold;">X</div>
<div class="t" style="left:985.64px;top:392.00px;font-size:10px;color:#000;font-weight:bold;transform:scaleX(0.9200);transform-origin:0 0;">AMETO</div>
<div class="t" style="left:1040.30px;top:385.00px;font-size:14px;color:#000;font-weight:bold;">X</div>
<div class="t" style="left:1049.64px;top:392.00px;font-size:10px;color:#000;font-weight:bold;transform:scaleX(0.9200);transform-origin:0 0;">HMETO</div>
<div class="t" style="left:1148.63px;top:385.00px;font-size:14px;color:#000;font-weight:bold;">S</div>
<div class="t" style="left:1157.97px;top:392.00px;font-size:10px;color:#000;font-weight:bold;transform:scaleX(0.9200);transform-origin:0 0;">NHx</div>
<div class="t" style="left:1391.37px;top:385.00px;font-size:14px;color:#000;font-weight:bold;">S</div>
<div class="t" style="left:1400.71px;top:392.00px;font-size:10px;color:#000;font-weight:bold;transform:scaleX(0.9200);transform-origin:0 0;">NOx</div>
<div class="t" style="left:74.11px;top:411.00px;font-size:14px;color:#000;font-weight:bold;">1</div>
<div class="t" style="left:124.88px;top:411.00px;font-size:14px;color:#000;font-weight:bold;">r1</div>
<div class="t" style="left:162.43px;top:411.00px;font-size:14px;color:#000;transform:scaleX(1.0445);transform-origin:0 0;">NITO growth</div>
<div class="t" style="left:74.11px;top:435.00px;font-size:14px;color:#000;font-weight:bold;">2</div>
<div class="t" style="left:124.88px;top:435.00px;font-size:14px;color:#000;font-weight:bold;">r2</div>
<div class="t" style="left:162.46px;top:435.00px;font-size:14px;color:#000;transform:scaleX(1.0151);transform-origin:0 0;">NITO decay</div>
<div class="t" style="left:929.61px;top:411.00px;font-size:14px;color:#000;">1</div>
<div class="t" style="left:927.28px;top:435.00px;font-size:14px;color:#000;">-1</div>
<div class="t" style="left:1117.55px;top:411.00px;font-size:14px;color:#000;transform:scaleX(1.0382);transform-origin:0 0;">-6.666666667</div>
<div class="t" style="left:1364.62px;top:411.00px;font-size:14px;color:#000;">6.666666667</div>
<div class="t" style="left:248.07px;top:478.00px;font-size:14px;color:#000;font-weight:bold;transform:scaleX(1.0265);transform-origin:0 0;">Elemental composition</div>
<div class="t" style="left:309.36px;top:500.00px;font-size:15px;color:#000;font-weight:bold;transform:scaleX(1.0685);transform-origin:0 0;">COD</div>
<div class="t" style="left:321.44px;top:529.00px;font-size:14px;color:#000;font-weight:bold;">N</div>
<div class="t" style="left:321.83px;top:553.00px;font-size:14px;color:#000;font-weight:bold;">P</div>
<div class="t" style="left:318.33px;top:574.00px;font-size:14px;color:#000;font-weight:bold;">Fe</div>
<div class="t" style="left:319.50px;top:594.00px;font-size:14px;color:#000;font-weight:bold;">Al</div>
<div class="t" style="left:302.96px;top:615.00px;font-size:14px;color:#000;font-weight:bold;transform:scaleX(0.9729);transform-origin:0 0;">Charge</div>
<div class="t" style="left:549.61px;top:502.00px;font-size:14px;color:#000;">1</div>
<div class="t" style="left:633.11px;top:502.00px;font-size:14px;color:#000;">1</div>
<div class="t" style="left:678.11px;top:502.00px;font-size:14px;color:#000;">1</div>
<div class="t" style="left:742.61px;top:502.00px;font-size:14px;color:#000;">1</div>
<div class="t" style="left:806.11px;top:502.00px;font-size:14px;color:#000;">1</div>
<div class="t" style="left:862.61px;top:502.00px;font-size:14px;color:#000;">1</div>
<div class="t" style="left:929.61px;top:502.00px;font-size:14px;color:#000;">1</div>
<div class="t" style="left:993.61px;top:502.00px;font-size:14px;color:#000;">1</div>
<div class="t" style="left:1057.61px;top:502.00px;font-size:14px;color:#000;">1</div>
<div class="t" style="left:1378.11px;top:502.00px;font-size:14px;color:#000;">-EEQ</div>
<div class="t" style="left:1412.33px;top:508.00px;font-size:10px;color:#000;">NO3</div>
<div class="t" style="left:668.00px;top:528.00px;font-size:14px;color:#000;">i</div>
<div class="t" style="left:672.11px;top:535.00px;font-size:10px;color:#000;">N,SU</div>
<div class="t" style="left:732.50px;top:528.00px;font-size:14px;color:#000;">i</div>
<div class="t" style="left:736.61px;top:535.00px;font-size:10px;color:#000;">N,XU</div>
<div class="t" style="left:796.27px;top:528.00px;font-size:14px;color:#000;">i</div>
<div class="t" style="left:800.39px;top:535.00px;font-size:10px;color:#000;">N,XE</div>
<div class="t" style="left:850.83px;top:528.00px;font-size:14px;color:#000;">i</div>
<div class="t" style="left:854.94px;top:535.00px;font-size:10px;color:#000;">N,BIO</div>
<div class="t" style="left:917.83px;top:528.00px;font-size:14px;color:#000;">i</div>
<div class="t" style="left:921.94px;top:535.00px;font-size:10px;color:#000;">N,BIO</div>
<div class="t" style="left:981.83px;top:528.00px;font-size:14px;color:#000;">i</div>
<div class="t" style="left:985.94px;top:535.00px;font-size:10px;color:#000;">N,BIO</div>
<div class="t" style="left:1045.83px;top:528.00px;font-size:14px;color:#000;">i</div>
<div class="t" style="left:1049.94px;top:535.00px;font-size:10px;color:#000;">N,BIO</div>
<div class="t" style="left:1158.61px;top:528.00px;font-size:14px;color:#000;">1</div>
<div class="t" style="left:1401.61px;top:528.00px;font-size:14px;color:#000;">1</div>
<div class="t" style="left:795.25px;top:553.00px;font-size:14px;color:#000;">i</div>
<div class="t" style="left:799.36px;top:560.00px;font-size:10px;color:#000;">P,BIO</div>
<div class="t" style="left:851.75px;top:553.00px;font-size:14px;color:#000;">i</div>
<div class="t" style="left:855.86px;top:560.00px;font-size:10px;color:#000;">P,BIO</div>
<div class="t" style="left:918.75px;top:553.00px;font-size:14px;color:#000;">i</div>
<div class="t" style="left:922.86px;top:560.00px;font-size:10px;color:#000;">P,BIO</div>
<div class="t" style="left:982.75px;top:553.00px;font-size:14px;color:#000;">i</div>
<div class="t" style="left:986.86px;top:560.00px;font-size:10px;color:#000;">P,BIO</div>
<div class="t" style="left:1046.75px;top:553.00px;font-size:14px;color:#000;">i</div>
<div class="t" style="left:1050.86px;top:560.00px;font-size:10px;color:#000;">P,BIO</div>
<div class="t" style="left:1142.67px;top:616.00px;font-size:14px;color:#000;">CH</div>
<div class="t" style="left:1162.89px;top:622.00px;font-size:10px;color:#000;">NHx</div>
<div class="t" style="left:1385.11px;top:616.00px;font-size:14px;color:#000;">CH</div>
<div class="t" style="left:1405.33px;top:622.00px;font-size:10px;color:#000;">NO3</div>
<div style="position:absolute;left:67px;top:282px;width:164px;height:62px;box-sizing:border-box;border:3px solid #000;border-radius:11px;background:#c0c0c0;box-shadow:2px 3px 4px rgba(0,0,0,0.35)"></div>
<div class="t" style="left:93.79px;top:295.00px;font-size:14px;color:#111;transform:scaleX(1.0177);transform-origin:0 0;">Check Continuity</div>
<div class="t" style="left:116.45px;top:315.00px;font-size:14px;color:#111;transform:scaleX(0.9874);transform-origin:0 0;">and Rates</div>
<div style="position:absolute;left:268px;top:277px;width:163px;height:62px;box-sizing:border-box;border:3px solid #000;border-radius:11px;background:#d9d9d9;box-shadow:2px 3px 4px rgba(0,0,0,0.35)"></div>
<div class="t" style="left:295.29px;top:290.00px;font-size:14px;color:#111;transform:scaleX(1.0177);transform-origin:0 0;">Check Continuity</div>
<div class="t" style="left:306.00px;top:308.00px;font-size:14px;color:#111;transform:scaleX(1.0314);transform-origin:0 0;">without Rates</div>
<div style="position:absolute;left:1560px;top:277px;width:1px;height:372px;background:#ababab;"></div>
<div style="position:absolute;left:1564px;top:258px;width:19px;height:19px;background:#fff;box-sizing:border-box;border:1px solid #ababab;"></div>
<svg style="position:absolute;left:1568px;top:264px;" width="10" height="6" viewBox="0 0 10 6"><path d="M0 5.5 L5 0 L10 5.5 Z" fill="#666"/></svg>
<div style="position:absolute;left:1564px;top:277px;width:19px;height:355px;background:#dadada;"></div>
<div style="position:absolute;left:1564px;top:277px;width:19px;height:118px;background:#fff;box-sizing:border-box;border:1px solid #ababab;"></div>
<div style="position:absolute;left:1564px;top:630px;width:19px;height:19px;background:#fff;box-sizing:border-box;border:1px solid #ababab;"></div>
<svg style="position:absolute;left:1568px;top:638px;" width="10" height="6" viewBox="0 0 10 6"><path d="M0 0 L5 5.5 L10 0 Z" fill="#666"/></svg>
<div style="position:absolute;left:0px;top:649px;width:1587px;height:29px;background:#e6e6e6;"></div>
<div style="position:absolute;left:0px;top:649px;width:1561px;height:1px;background:#ababab;"></div>
<svg style="position:absolute;left:28px;top:657px;" width="8" height="12" viewBox="0 0 8 12"><path d="M7 0.5 L1 6 L7 11.5 Z" fill="#c2c2c2"/></svg>
<svg style="position:absolute;left:56px;top:657px;" width="8" height="12" viewBox="0 0 8 12"><path d="M1 0.5 L7 6 L1 11.5 Z" fill="#c2c2c2"/></svg>
<div style="position:absolute;left:104px;top:653px;width:1px;height:21px;background:#9f9f9f;"></div>
<div style="position:absolute;left:166px;top:653px;width:1px;height:21px;background:#9f9f9f;"></div>
<div style="position:absolute;left:280px;top:653px;width:1px;height:21px;background:#9f9f9f;"></div>
<div style="position:absolute;left:622px;top:653px;width:1px;height:21px;background:#9f9f9f;"></div>
<div style="position:absolute;left:805px;top:653px;width:1px;height:21px;background:#9f9f9f;"></div>
<div class="t" style="left:115.59px;top:652.00px;font-size:16px;color:#444;transform:scaleX(1.0982);transform-origin:0 0;">Help</div>
<div class="t" style="left:179.15px;top:652.00px;font-size:16px;color:#444;transform:scaleX(1.0571);transform-origin:0 0;">Parameters</div>
<div class="t" style="left:292.63px;top:652.00px;font-size:16px;color:#444;transform:scaleX(1.0685);transform-origin:0 0;">PU parameters</div>
<div style="position:absolute;left:422px;top:649px;width:76px;height:26px;background:#fff;box-sizing:border-box;border-left:1px solid #ababab;border-right:1px solid #ababab;"></div>
<div style="position:absolute;left:422px;top:672.5px;width:76px;height:2px;background:#217346;"></div>
<div class="t" style="left:433.43px;top:652.00px;font-size:16px;color:#217346;font-weight:bold;transform:scaleX(1.1252);transform-origin:0 0;">Model</div>
<div class="t" style="left:509.12px;top:652.00px;font-size:16px;color:#444;transform:scaleX(1.0967);transform-origin:0 0;">Components</div>
<div class="t" style="left:637.76px;top:652.00px;font-size:16px;color:#444;transform:scaleX(1.0510);transform-origin:0 0;">Calculated variables</div>
<svg style="position:absolute;left:838px;top:653px;" width="22" height="22" viewBox="0 0 22 22"><circle cx="10.8" cy="11" r="9.6" fill="none" stroke="#666" stroke-width="1.3"/><path d="M10.8 5.5 V16.5 M5.3 11 H16.3" stroke="#666" stroke-width="1.6"/></svg>
<div style="position:absolute;left:1285px;top:657px;width:3px;height:3px;background:#a0a0a0;"></div>
<div style="position:absolute;left:1285px;top:663px;width:3px;height:3px;background:#a0a0a0;"></div>
<div style="position:absolute;left:1285px;top:669px;width:3px;height:3px;background:#a0a0a0;"></div>
<div style="position:absolute;left:1303px;top:654px;width:258px;height:19px;background:#d9d9d9;"></div>
<div style="position:absolute;left:1303px;top:654px;width:19px;height:19px;background:#fff;box-sizing:border-box;border:1px solid #ababab;"></div>
<svg style="position:absolute;left:1309px;top:659px;" width="6" height="10" viewBox="0 0 6 10"><path d="M5.5 0 L0 5 L5.5 10 Z" fill="#666"/></svg>
<div style="position:absolute;left:1321px;top:654px;width:38px;height:19px;background:#fff;box-sizing:border-box;border:1px solid #ababab;"></div>
<div style="position:absolute;left:1542px;top:654px;width:19px;height:19px;background:#fff;box-sizing:border-box;border:1px solid #ababab;"></div>
<svg style="position:absolute;left:1549px;top:659px;" width="6" height="10" viewBox="0 0 6 10"><path d="M0 0 L5.5 5 L0 10 Z" fill="#666"/></svg>
<div style="position:absolute;left:0px;top:678px;width:1587px;height:28px;background:#f3f2f1;"></div>
<div style="position:absolute;left:0px;top:678px;width:1587px;height:1px;background:#d8d8d8;"></div>
<div class="t" style="left:10.25px;top:685.00px;font-size:13px;color:#444;transform:scaleX(1.0129);transform-origin:0 0;">Ready</div>
<div style="position:absolute;left:1207px;top:679px;width:50px;height:26px;background:#d2d0ce;"></div>
<svg style="position:absolute;left:1222px;top:682px;" width="19" height="19" viewBox="0 0 19 19"><rect x="1.8" y="1.8" width="15.6" height="15.6" fill="none" stroke="#555" stroke-width="2"/><path d="M7 1 V18 M12.2 1 V18 M1 7 H18 M1 12.2 H18" stroke="#555" stroke-width="1.8"/></svg>
<svg style="position:absolute;left:1272px;top:682px;" width="20" height="19" viewBox="0 0 20 19"><rect x="1.8" y="1.8" width="15.8" height="15.6" fill="none" stroke="#555" stroke-width="2"/><rect x="5.5" y="4.8" width="8.4" height="9.6" fill="none" stroke="#444" stroke-width="1.5"/><path d="M7 8 H12.4 M7 11 H12.4" stroke="#777" stroke-width="1.2"/></svg>
<svg style="position:absolute;left:1322px;top:682px;" width="20" height="19" viewBox="0 0 20 19"><rect x="1.8" y="1.8" width="15.8" height="15.6" fill="none" stroke="#555" stroke-width="2"/><path d="M1.8 10.6 H11.8 V1.8 M7.3 1.8 V10.6" fill="none" stroke="#555" stroke-width="1.5"/></svg>
<div style="position:absolute;left:1363px;top:691px;width:11px;height:1px;background:#555;"></div>
<div style="position:absolute;left:1380px;top:691px;width:125px;height:1px;background:#999;"></div>
<div style="position:absolute;left:1442px;top:686px;width:1px;height:11px;background:#999;"></div>
<div style="position:absolute;left:1430px;top:685px;width:6px;height:13px;background:#666;"></div>
<div style="position:absolute;left:1510px;top:691px;width:12px;height:1px;background:#555;"></div>
<div style="position:absolute;left:1515.5px;top:685.5px;width:1px;height:12px;background:#555;"></div>
<div class="t" style="left:1536.03px;top:685.00px;font-size:14px;color:#444;transform:scaleX(0.9077);transform-origin:0 0;">85%</div>
<div style="position:absolute;left:0px;top:0px;width:1px;height:706px;background:#217346;"></div>
<div style="position:absolute;left:1586px;top:0px;width:1px;height:706px;background:#217346;"></div>
<div style="position:absolute;left:0px;top:705px;width:1587px;height:1px;background:#217346;"></div>
</body></html>
